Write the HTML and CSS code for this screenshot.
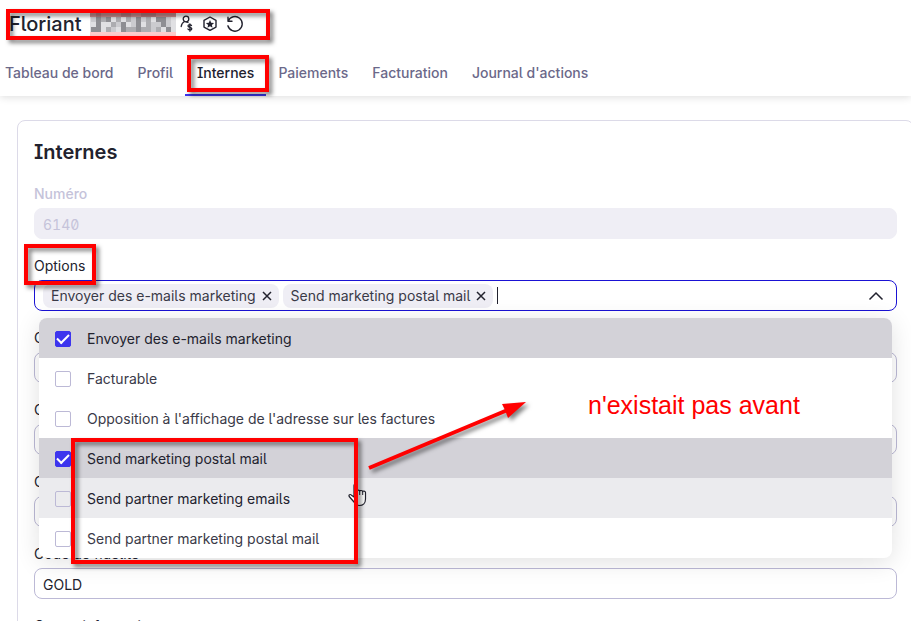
FILE: index.html
```html
<!DOCTYPE html>
<html lang="fr">
<head>
    <meta charset="UTF-8">
    <meta name="viewport" content="width=device-width, initial-scale=1.0">
    <title>Internes</title>
    <link rel="stylesheet" href="styles.css">
</head>
<body>
    <header class="header">
        <div class="title">
            <h1>Floriant</h1>
            <svg class="mosaic" width="86" height="26" viewBox="0 0 86 26" shape-rendering="crispEdges">
                <rect width="86" height="26" fill="#e0e0e3"/>
                <rect y="1" width="86" height="5" fill="#cf9293"/>
                <rect y="21" width="86" height="5" fill="#ffcaca"/>
                <path fill="#8e8e93" d="M6 6h5v10h-5zM1 16h10v5h-10zM16 6h5v5h-5zM31 11h5v10h-5zM46 6h5v15h-5zM66 6h10v5h-10zM71 11h5v5h-5zM76 16h5v5h-5z"/>
                <path fill="#adadb1" d="M11 6h5v5h-5zM16 16h5v5h-5zM21 11h5v5h-5zM26 6h5v5h-5zM36 6h5v5h-5zM36 16h10v5h-10zM56 6h5v10h-5zM51 16h10v5h-10zM66 16h5v5h-5z"/>
                <path fill="#cbcbcf" d="M1 6h5v5h-5zM21 16h5v5h-5zM26 11h5v5h-5zM41 6h5v10h-5zM51 6h5v5h-5zM61 11h10v5h-10zM76 6h5v10h-5zM61 16h5v5h-5z"/>
                <path fill="#bb8184" d="M6 1h5v5h-5zM31 1h10v5h-10zM51 1h15v5h-15z"/>
            </svg>
            <svg class="icon" width="14" height="18" viewBox="0 0 14 18">
                <g fill="none" stroke="#22222e" stroke-width="1.3" stroke-linecap="round">
                    <circle cx="6" cy="4" r="2.800"/>
                    <path d="M4.500 6.500C2.500 7.500 1.500 9 1.200 11.500M6.500 7l1.500.5"/>
                    <path d="M11.500 10.500C10.500 9 8 9.500 8 11c0 1.700 3.800 1 3.800 2.800 0 1.600-3 1.700-3.900.2M9.900 8.800v7.400"/>
                </g>
            </svg>
            <svg class="icon" width="16" height="18" viewBox="0 0 16 18">
                <path fill="none" stroke="#22222e" stroke-width="1.4" stroke-linejoin="round" d="M8 2l6 3.300v6.800l-6 3.300-6-3.300V5.300z"/>
                <path fill="#22222e" d="M8 5l1.200 2.700 2.900.3-2.200 1.900.7 2.900L8 11.300l-2.600 1.500.7-2.900L3.900 8l2.900-.3z"/>
            </svg>
            <svg class="icon" width="18" height="18" viewBox="0 0 18 18">
                <path fill="none" stroke="#22222e" stroke-width="1.4" stroke-linecap="round" stroke-linejoin="round" d="M2 2.200v4h4M2.200 6A7.300 7.300 0 1 1 1.900 10.800"/>
            </svg>
        </div>
        <nav class="tabs">
            <a href="#">Tableau de bord</a>
            <a href="#">Profil</a>
            <a href="#" class="active">Internes</a>
            <a href="#">Paiements</a>
            <a href="#">Facturation</a>
            <a href="#">Journal d'actions</a>
        </nav>
    </header>

    <main class="card">
        <h2>Internes</h2>
        <div class="field disabled">
            <label for="numero">Numéro</label>
            <input type="text" id="numero" value="6140" disabled>
        </div>
        <div class="field options">
            <label for="options">Options</label>
            <div class="multiselect">
                <span class="tag">Envoyer des e-mails marketing
                    <button type="button" aria-label="Retirer"><svg width="10" height="10" viewBox="0 0 10 10"><path d="M1 1l8 8M9 1L1 9"/></svg></button>
                </span>
                <span class="tag">Send marketing postal mail
                    <button type="button" aria-label="Retirer"><svg width="10" height="10" viewBox="0 0 10 10"><path d="M1 1l8 8M9 1L1 9"/></svg></button>
                </span>
                <span class="caret"></span>
                <input type="text" id="options">
                <svg class="chevron" width="16" height="10" viewBox="0 0 16 10"><path d="M1.500 8.500L8 2l6.500 6.500"/></svg>
            </div>
            <div class="dropdown">
                <label class="selected"><input type="checkbox" checked><span>Envoyer des e-mails marketing</span></label>
                <label><input type="checkbox"><span>Facturable</span></label>
                <label><input type="checkbox"><span>Opposition à l'affichage de l'adresse sur les factures</span></label>
                <label class="selected"><input type="checkbox" checked><span>Send marketing postal mail</span></label>
                <label class="hover"><input type="checkbox"><span>Send partner marketing emails</span></label>
                <label><input type="checkbox"><span>Send partner marketing postal mail</span></label>
            </div>
        </div>
        <div class="field">
            <label for="champ1">C</label>
            <input type="text" id="champ1">
        </div>
        <div class="field">
            <label for="champ2">C</label>
            <input type="text" id="champ2">
        </div>
        <div class="field">
            <label for="champ3">C</label>
            <input type="text" id="champ3">
        </div>
        <div class="field">
            <label for="fidelite">Code de fidélité</label>
            <input type="text" id="fidelite" value="GOLD">
        </div>
        <div class="field">
            <label for="centre">Centre informatique</label>
            <input type="text" id="centre">
        </div>
    </main>

    <!-- annotations -->
    <svg class="cursor" width="20" height="24" viewBox="0 0 20 24">
        <path fill="#fff" stroke="#22222e" stroke-width="1.200" stroke-linejoin="round" d="M6 14V2.500C6 .6 8.700.6 8.700 2.500V8c0-1.300 3-1.300 3 .3 0-1.200 3-1.100 3 .5 0-1.100 2.800-1 2.800.8V16c0 4-2.500 6.500-6 6.500-3.200 0-4.500-1.500-5.500-3.500L1.200 13.500c-.8-1.700 1-2.700 2.300-1.300z"/>
        <path fill="none" stroke="#22222e" d="M8.700 8v4M11.700 8.500V12M14.700 9v3"/>
    </svg>
    <div class="mark mark-name"></div>
    <div class="mark mark-tab"></div>
    <div class="mark mark-options"></div>
    <div class="mark mark-items"></div>
    <svg class="arrow" width="170" height="80" viewBox="0 0 170 80">
        <path stroke="#f00" stroke-width="4" d="M9 73L150 14"/>
        <path fill="#f00" d="M166 7L142 9l3 6 3 8z"/>
    </svg>
    <p class="note">n'existait pas avant</p>
</body>
</html>
```
FILE: styles.css
```css
* {
    box-sizing: border-box;
}
body {
    margin: 0;
    height: 100vh;
    overflow: hidden;
    position: relative;
    background: #fff;
    color: #22222e;
    font-family: Inter, "Liberation Sans", sans-serif;
    font-size: 14px;
    line-height: 20px;
    font-feature-settings: "cv08", "cv05";
}
.header {
    height: 96px;
    padding: 8px 5px 0;
    display: flex;
    flex-direction: column;
    justify-content: space-between;
    box-shadow: 0 1px 8px rgba(0, 0, 0, 0.14);
}
.title {
    display: flex;
    align-items: center;
    height: 32px;
    padding-left: 4px;
}
h1 {
    margin: 0 8px 0 0;
    font-size: 20px;
    font-weight: 500;
}
.icon {
    margin-left: 8px;
}
.mosaic + .icon {
    margin-left: 4px;
}
.tabs {
    display: flex;
    gap: 24px;
}
.tabs a {
    color: #6b6889;
    font-weight: 500;
    text-decoration: none;
    padding-bottom: 11px;
    border-bottom: 2px solid transparent;
}
.tabs a.active {
    color: #22222e;
    margin: 0 -12px;
    padding-left: 12px;
    padding-right: 12px;
    border-color: #3d35ee;
}
.card {
    margin: 24px -3px 0 17px;
    padding: 19px 16px;
    border: 1px solid #dcdae8;
    border-radius: 8px;
}
h2 {
    margin: 0 0 20px;
    font-size: 20px;
    line-height: 24px;
    font-weight: 600;
}
.field {
    position: relative;
    margin-bottom: 17px;
}
.field > label {
    display: block;
    margin-bottom: 4px;
}
.field > input {
    display: block;
    width: 100%;
    height: 31px;
    padding: 2px 8px 0;
    border: 1px solid #bcb9d6;
    border-radius: 8px;
    background: transparent;
    color: #22222e;
    font: inherit;
}
.disabled > label {
    color: #c5c3da;
    font-weight: 500;
}
.disabled > input {
    border-color: #efeef5;
    background: #efeef5;
    color: #c5c3da;
    font-feature-settings: "tnum", "zero";
}
.multiselect {
    display: flex;
    align-items: center;
    height: 31px;
    padding: 0 12px 0 8px;
    border: 1px solid #1a12d4;
    border-radius: 8px;
}
.tag {
    display: flex;
    align-items: center;
    gap: 6px;
    height: 24px;
    margin-right: 4px;
    padding: 1px 7px 0 8px;
    border-radius: 8px;
    background: #efeef5;
    color: #3a3a48;
    white-space: nowrap;
}
.tag button {
    display: flex;
    padding: 0;
    border: 0;
    background: none;
}
.tag path, .chevron path {
    fill: none;
    stroke: #22222e;
    stroke-width: 1.5;
}
.caret {
    width: 1px;
    height: 17px;
    background: #22222e;
}
.multiselect input {
    flex: 1;
    min-width: 0;
    border: 0;
    outline: 0;
    background: none;
    font: inherit;
}
.dropdown {
    position: absolute;
    z-index: 1;
    top: 62px;
    left: 5px;
    right: 5px;
    overflow: hidden;
    border-radius: 8px;
    background: #fff;
    box-shadow: 0 4px 24px rgba(0, 0, 0, 0.12);
}
.dropdown label {
    display: flex;
    align-items: center;
    gap: 16px;
    height: 40px;
    padding: 2px 16px 0;
    color: #3a3a48;
}
.dropdown .selected {
    background: #d3d2d8;
    color: #22222e;
}
.dropdown .hover {
    background: #ebebee;
    color: #22222e;
}
.dropdown input {
    appearance: none;
    width: 16px;
    height: 16px;
    margin: 0;
    border: 1px solid #bcb9d6;
    border-radius: 2px;
    display: grid;
    place-items: center;
}
.dropdown input:checked {
    border-color: #3d35ee;
    background: #3d35ee;
}
.dropdown input:checked::after {
    content: "";
    width: 10px;
    height: 5px;
    margin-bottom: 3px;
    border-left: 2px solid #fff;
    border-bottom: 2px solid #fff;
    transform: rotate(-45deg);
}
.mark {
    position: absolute;
    z-index: 2;
    border: 4px solid #f00;
    filter: drop-shadow(3px 3px 2px rgba(0, 0, 0, 0.5));
}
.mark-name {
    left: 6px;
    top: 9px;
    width: 264px;
    height: 31px;
}
.mark-tab {
    left: 187px;
    top: 55px;
    width: 82px;
    height: 37px;
}
.mark-options {
    left: 24px;
    top: 244px;
    width: 72px;
    height: 41px;
}
.mark-items {
    left: 71px;
    top: 438px;
    width: 287px;
    height: 126px;
}
.cursor {
    position: absolute;
    z-index: 2;
    left: 348px;
    top: 483px;
}
.arrow {
    position: absolute;
    z-index: 2;
    left: 360px;
    top: 395px;
    filter: drop-shadow(3px 3px 2px rgba(0, 0, 0, 0.5));
}
.note {
    position: absolute;
    z-index: 2;
    left: 588px;
    top: 390px;
    margin: 0;
    color: #f00;
    font-family: "Liberation Sans", Arial, sans-serif;
    font-size: 25px;
    line-height: 30px;
}
```
